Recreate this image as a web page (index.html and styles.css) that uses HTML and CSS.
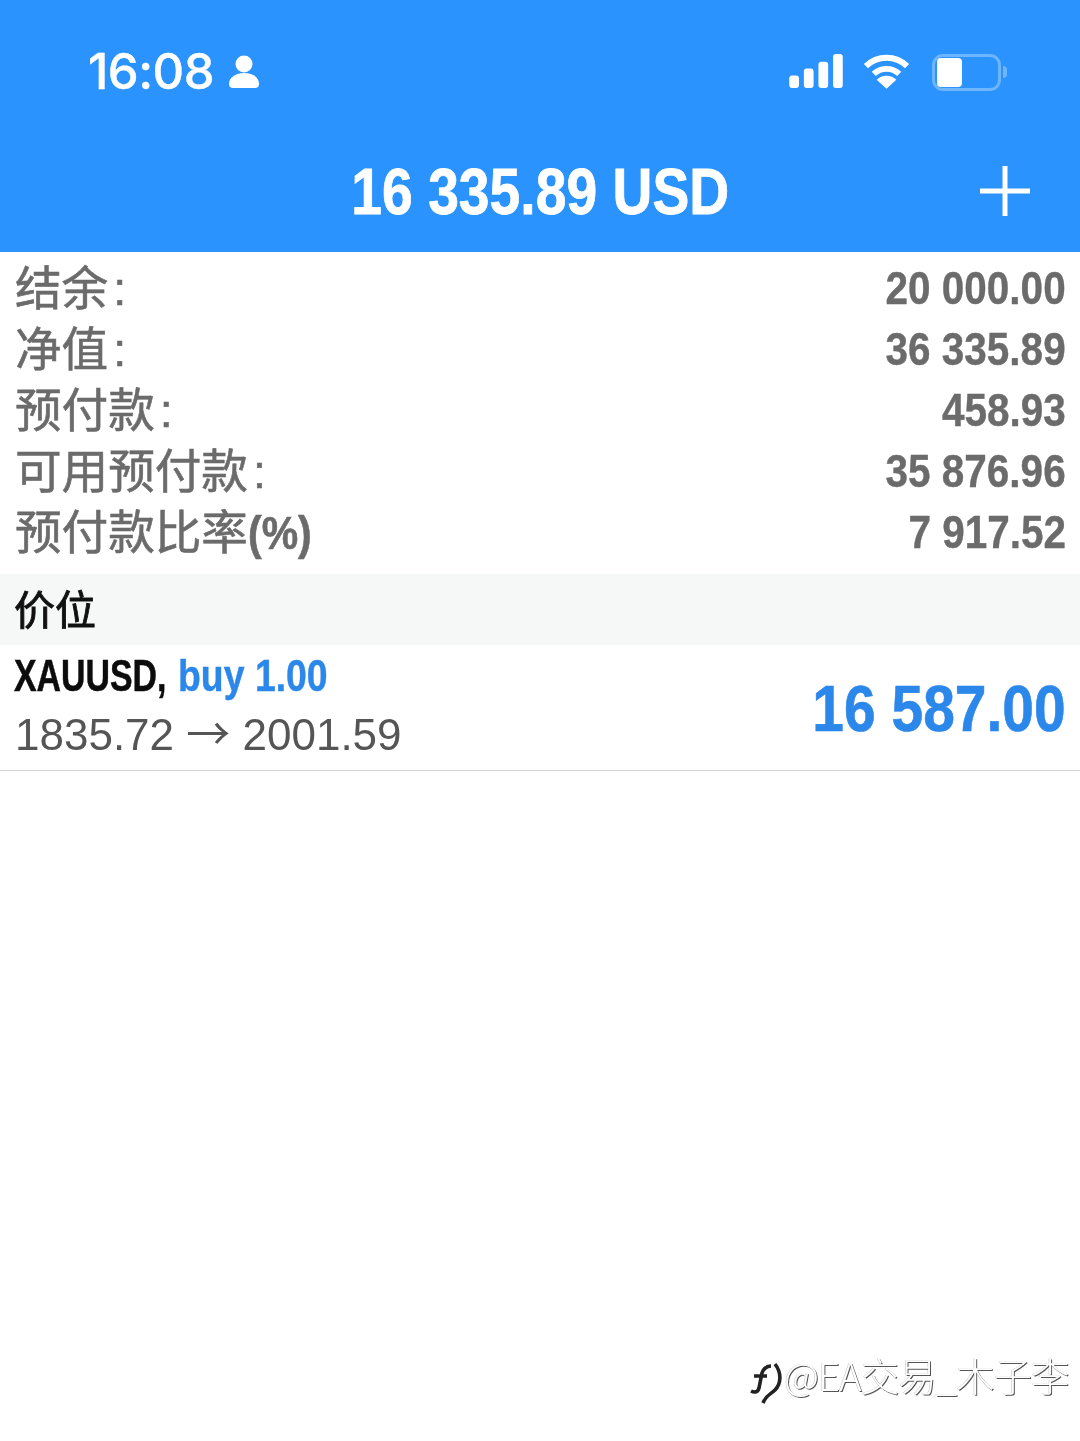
FILE: index.html
```html
<!DOCTYPE html>
<html lang="zh">
<head>
<meta charset="utf-8">
<title>Trade</title>
<link rel="stylesheet" href="styles.css">
</head>
<body>
<div class="page">
  <header class="top">
    <div class="status">
      <div class="status-left">
        <span class="time">16:08</span>
        <svg class="person" viewBox="0 0 32 34"><circle cx="16" cy="9" r="8.5"/><path d="M1 29c0-7 7-11 15-11s15 4 15 11c0 3-2 4-4 4H5c-2 0-4-1-4-4z"/></svg>
      </div>
      <div class="status-right">
        <svg class="signal" viewBox="0 0 56 36"><rect x="0" y="22" width="10" height="13" rx="3"/><rect x="15" y="15" width="10" height="20" rx="3"/><rect x="30" y="8" width="10" height="27" rx="3"/><rect x="45" y="0" width="10" height="35" rx="3"/></svg>
        <svg class="wifi" viewBox="0 0 48 36"><path d="M3 13a30 30 0 0 1 42 0" class="arc"/><path d="M11 21a19 19 0 0 1 26 0" class="arc"/><path d="M14 27a14 14 0 0 1 20 0l-10 9z" class="wedge"/></svg>
        <div class="battery"><div class="battery-fill"></div></div>
        <div class="battery-tip"></div>
      </div>
    </div>
    <div class="titlebar">
      <span class="title"><span class="squeeze">16 335.89 USD</span></span>
      <svg class="plus" viewBox="0 0 50 50"><path d="M25 0v50M0 25h50"/></svg>
    </div>
  </header>
  <section class="summary">
    <div class="row"><span class="label">结余<span class="colon">:</span></span><span class="value">20 000.00</span></div>
    <div class="row"><span class="label">净值<span class="colon">:</span></span><span class="value">36 335.89</span></div>
    <div class="row"><span class="label">预付款<span class="colon">:</span></span><span class="value">458.93</span></div>
    <div class="row"><span class="label">可用预付款<span class="colon">:</span></span><span class="value">35 876.96</span></div>
    <div class="row"><span class="label">预付款比率<span class="paren">(%)</span></span><span class="value">7 917.52</span></div>
  </section>
  <div class="section-head">价位</div>
  <section class="position">
    <div class="pos-left">
      <div class="pos-name"><span class="sym">XAUUSD,</span><span class="side">buy 1.00</span></div>
      <div class="pos-route">1835.72 <span class="arrow">→</span> 2001.59</div>
    </div>
    <span class="profit">16 587.00</span>
  </section>
  <div class="watermark">
    <svg class="wm-logo" viewBox="0 0 34 44"><path d="M2 29c4 2 7 1 8-3l3-15c1-4 5-7 9-7M5 14h13M26 2c7 9 6 20 0 26-4 4-9 5-12 13" /></svg>
    <span class="wm-text">@EA交易_木子李</span>
  </div>
</div>
</body>
</html>
```
FILE: styles.css
```css
* { box-sizing: border-box; }
html, body { margin: 0; padding: 0; background: #fff; }
.page {
  position: relative;
  width: 1080px;
  height: 1441px;
  overflow: hidden;
  font-family: "Liberation Sans", "Noto Sans CJK SC", sans-serif;
  filter: blur(0.5px);
}
.top { height: 252px; background: #2b93fd; color: #fff; display: flex; flex-direction: column; }
.status { height: 132px; padding: 12px 73px 0 88px; display: flex; justify-content: space-between; align-items: center; }
.status-left { display: flex; align-items: center; gap: 14px; }
.time { font-family: Inter, sans-serif; font-weight: 500; font-size: 49px; line-height: 50px; letter-spacing: -0.5px; -webkit-text-stroke: 0.4px #fff; }
.person { width: 32px; height: 34px; fill: #fff; }
.status-right { display: flex; align-items: center; }
.signal { width: 55px; height: 35px; fill: #fff; margin-right: 19px; margin-top: -1px; }
.wifi { width: 47px; height: 36px; margin-right: 22px; margin-top: -3px; }
.wifi .arc { fill: none; stroke: #fff; stroke-width: 6; }
.wifi .wedge { fill: #fff; }
.battery { width: 69px; height: 37px; border: 3px solid #6db5fe; border-radius: 11px; padding: 1px 2px; }
.battery-fill { width: 25px; height: 100%; background: #fff; border-radius: 4px; }
.battery-tip { width: 4px; height: 12px; background: #6db5fe; border-radius: 0 6px 6px 0; margin-left: 2px; }
.titlebar { position: relative; flex: 1; display: flex; align-items: center; justify-content: center; }
.title { font-weight: 700; font-size: 65px; line-height: 70px; -webkit-text-stroke: 0.8px #fff; }
.squeeze { display: inline-block; transform: scaleX(0.85); transform-origin: center; }
.plus { position: absolute; left: 980px; top: 34px; width: 50px; height: 50px; fill: none; stroke: #fff; stroke-width: 5; }
.summary { padding-top: 6px; height: 322px; }
.row { height: 61px; padding: 0 14px 0 15px; display: flex; justify-content: space-between; align-items: center; color: #6b6b6b; }
.label { font-size: 46.6px; font-family: "Noto Sans CJK SC", sans-serif; line-height: 53px; height: 61px; white-space: nowrap; -webkit-text-stroke: 0.6px #6b6b6b; }
.colon { font-family: "Liberation Sans", sans-serif; font-weight: 400; margin-left: 5px; }
.paren { display: inline-block; font-family: "Liberation Sans", sans-serif; font-weight: 700; transform: scaleX(0.88); transform-origin: left center; }
.value { font-size: 46px; font-weight: 700; line-height: 61px; display: inline-block; transform: scaleX(0.88); transform-origin: right center; white-space: nowrap; -webkit-text-stroke: 0.4px #6b6b6b; }
.section-head { height: 71px; background: #f6f7f7; padding-left: 14px; font-family: "Noto Sans CJK SC", sans-serif; font-size: 41px; line-height: 66px; color: #111; -webkit-text-stroke: 0.9px #111; }
.position { height: 126px; padding: 0 14px 0 14px; border-bottom: 1px solid #d2d2d2; display: flex; justify-content: space-between; align-items: center; }
.pos-left { margin-top: -3px; }
.pos-name { font-size: 44px; line-height: 58px; margin-top: -2px; margin-bottom: 2px; font-weight: 700; white-space: nowrap; width: 380px; }
.sym { color: #0c0c0c; display: inline-block; transform: scaleX(0.77); transform-origin: left center; -webkit-text-stroke: 0.5px #0c0c0c; }
.side { color: #2b87ea; display: inline-block; margin-left: -34px; transform: scaleX(0.85); transform-origin: left center; -webkit-text-stroke: 0.4px #2b87ea; }
.pos-route { font-size: 44px; line-height: 56px; color: #555; white-space: nowrap; padding-left: 1px; }
.arrow { font-family: "Noto Sans CJK SC", sans-serif; font-size: 44px; line-height: 40px; }
.profit { font-size: 64px; font-weight: 700; color: #2b87ea; line-height: 70px; margin-top: 3px; display: inline-block; transform: scaleX(0.89); transform-origin: right center; white-space: nowrap; -webkit-text-stroke: 0.6px #2b87ea; }
.watermark { position: absolute; left: 749px; top: 1349px; display: flex; align-items: flex-start; gap: 1px; }
.wm-logo { width: 34px; height: 44px; margin-top: 13px; fill: none; stroke: #222; stroke-width: 3.6; }
.wm-text { font-family: "Noto Sans CJK SC", sans-serif; font-weight: 300; font-size: 38.5px; line-height: 50px; color: #fff; letter-spacing: -1px; white-space: nowrap; text-shadow: 1px 1px 0 #555, -0.5px -0.5px 0 #bbb; }
```
